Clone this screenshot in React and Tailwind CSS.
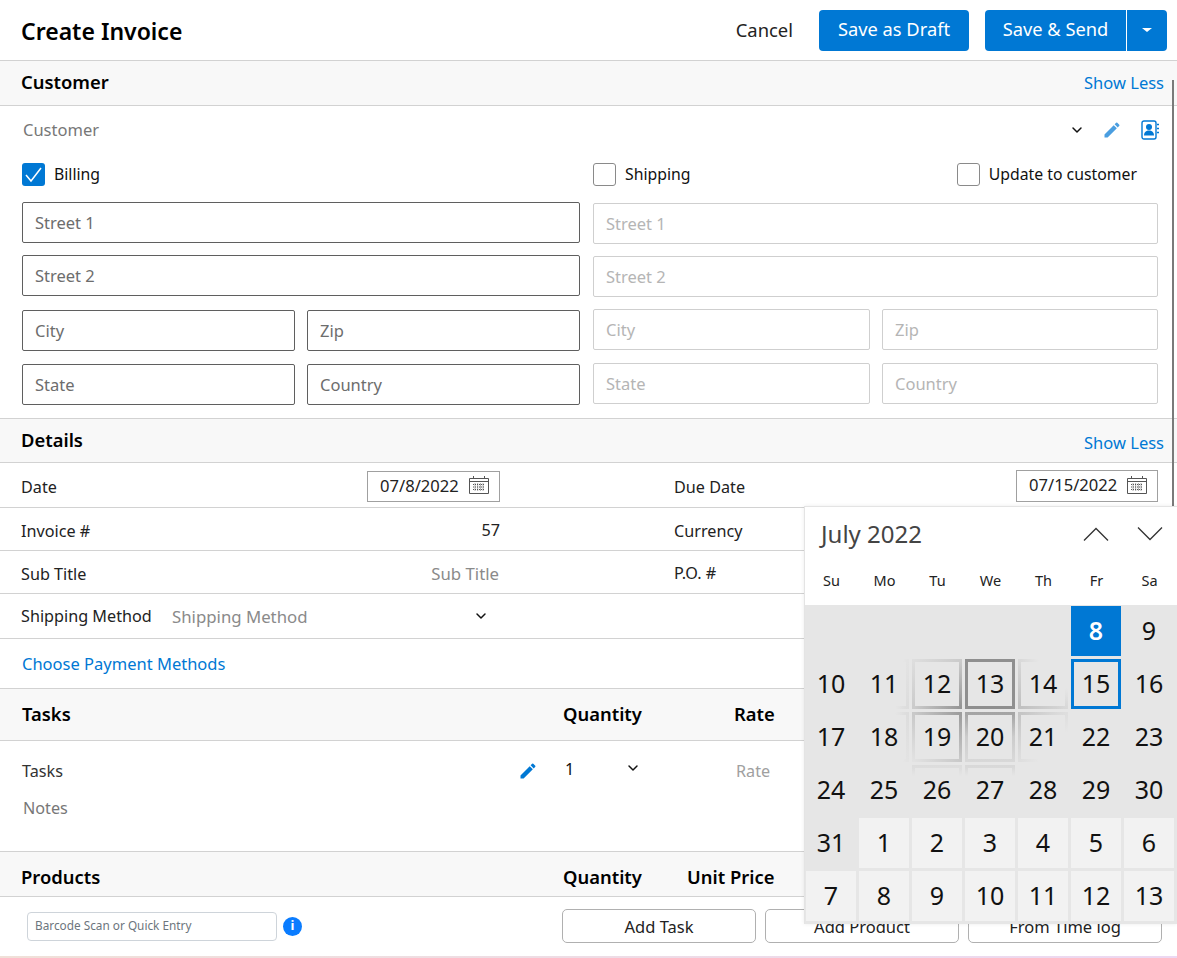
import React from "react";
import { ChevronDown } from "lucide-react";

const font = "font-['Noto_Sans','Liberation_Sans',sans-serif]";

function EditIcon({ className }) {
  return (
    <svg viewBox="0 0 24 24" className={className} fill="currentColor">
      <path d="M3 17.25V21h3.75L17.81 9.94l-3.75-3.75L3 17.25zM20.71 7.04a1 1 0 0 0 0-1.41l-2.34-2.34a1 1 0 0 0-1.41 0l-1.83 1.83 3.75 3.75 1.83-1.83z" />
    </svg>
  );
}

function ContactIcon() {
  return (
    <svg viewBox="0 0 18 20" className="w-[18px] h-[20px] text-[#0078d4]" fill="none">
      <rect x="1" y="1" width="14" height="18" rx="2" stroke="currentColor" strokeWidth="1.4" />
      <circle cx="8" cy="7" r="3" fill="currentColor" />
      <path d="M3 15.500c0-3.500 2.200-5 5-5s5 1.500 5 5z" fill="currentColor" />
      <path d="M16 4.500h2M16 8.500h2M16 12.500h2" stroke="currentColor" strokeWidth="1.600" />
    </svg>
  );
}

function CalendarIcon() {
  return (
    <svg viewBox="0 0 20 20" className="w-5 h-5 text-[#555] -translate-y-[1px]" fill="none" stroke="currentColor">
      <path d="M.5 3.500h19v15H.5z" />
      <path d="M.5 6.500h19M4.500 1v3M15.500 1v3" />
      <path d="M4 9.500h12M4 12h12M4 14.500h12M6 8.500v7.500M8.700 8.500v7.500M11.400 8.500v7.500M14 8.500v7.500" strokeDasharray="1 1" />
    </svg>
  );
}

function SectionHead({ title, action, className, titleClass = "", actionClass = "" }) {
  return (
    <div className={`flex items-center justify-between bg-[#f8f8f8] border-b border-[#d2d2d2] pl-[21px] pr-[13px] ${className}`}>
      <span className={`text-[18.4px] font-semibold text-black ${titleClass}`}>{title}</span>
      {action && <span className={`text-[16.5px] text-[#0078d4] ${actionClass}`}>{action}</span>}
    </div>
  );
}

function Check({ checked, label, className = "" }) {
  return (
    <label className={`flex items-center gap-[9px] text-[15.8px] text-[#111] ${className}`}>
      {checked ? (
        <span className="w-[23px] h-[23px] rounded-[3px] bg-[#0078d4] flex items-center justify-center">
          <svg viewBox="0 0 23 23" className="w-[23px] h-[23px]" fill="none" stroke="white" strokeWidth="1.500">
            <path d="M4 12l5 6L19 5" />
          </svg>
        </span>
      ) : (
        <span className="w-[23px] h-[23px] rounded-[3px] border border-[#8a8a8a] bg-white" />
      )}
      {label}
    </label>
  );
}

function Field({ label, active, className = "" }) {
  return (
    <div
      className={`h-[41px] flex items-center rounded-[2px] border pl-[12px] pt-[1px] text-[16.5px] ${
        active ? "border-[#5f5f5f] text-[#6d6d6d]" : "border-[#cfcfcf] text-[#b5b5b5]"
      } ${className}`}
    >
      {label}
    </div>
  );
}

function AddressColumn({ active, className }) {
  return (
    <div className={`flex flex-col ${className}`}>
      <Field label="Street 1" active={active} />
      <Field label="Street 2" active={active} className="mt-3" />
      <div className={`grid gap-3 ${active ? "grid-cols-[273px_273px] mt-[14px]" : "grid-cols-[277px_276px] mt-3"}`}>
        <Field label="City" active={active} />
        <Field label="Zip" active={active} />
      </div>
      <div className={`grid gap-3 mt-[13px] ${active ? "grid-cols-[273px_273px]" : "grid-cols-[277px_276px]"}`}>
        <Field label="State" active={active} />
        <Field label="Country" active={active} />
      </div>
    </div>
  );
}

function DateBox({ value, className }) {
  return (
    <div className={`flex items-center justify-between border border-[#a0a0a0] text-[16.6px] text-[#222] pl-3 pr-[10px] ${className}`}>
      {value}
      <CalendarIcon />
    </div>
  );
}

function DetailRow({ left, right, className }) {
  return (
    <div className={`flex items-center border-b border-[#d2d2d2] ${className}`}>
      <div className="w-[479px] ml-[21px] flex items-center justify-between text-[16.2px] text-[#222]">{left}</div>
      <div className="ml-[174px] flex-1 pr-[19px] flex items-center justify-between text-[16.2px] text-[#222]">{right}</div>
    </div>
  );
}

const weeks = [
  [null, null, null, null, null, 8, 9],
  [10, 11, 12, 13, 14, 15, 16],
  [17, 18, 19, 20, 21, 22, 23],
  [24, 25, 26, 27, 28, 29, 30],
  [31, 1, 2, 3, 4, 5, 6],
  [7, 8, 9, 10, 11, 12, 13],
];

// hover reveal around the pointer, lives on 12/13/14 and 19/20/21
const reveal = {
  "1-1": "border-[3px] [border-image:linear-gradient(100deg,#e6e6e6_78%,#dcdcdc)_1]",
  "1-2": "border-[3px] [border-image:linear-gradient(135deg,#dedede,#cbcbcb_50%,#959595)_1]",
  "1-3": "border-[3px] border-[#8f8f8f]",
  "1-4": "border-[3px] [border-image:linear-gradient(225deg,#e6e6e6_30%,#d2d2d2_60%,#c0c0c0)_1]",
  "2-1": "border-[3px] [border-image:linear-gradient(80deg,#e6e6e6_78%,#dcdcdc)_1]",
  "2-2": "border-[3px] [border-image:linear-gradient(45deg,#e2e2e2,#c9c9c9_50%,#9c9c9c)_1]",
  "2-3": "border-[3px] [border-image:linear-gradient(to_bottom,#a4a4a4,#cccccc_50%,#d8d8d8)_1]",
  "2-4": "border-[3px] [border-image:linear-gradient(135deg,#c4c4c4,#dadada_40%,#e6e6e6_70%)_1]",
  "3-2": "border-[3px] [border-image:linear-gradient(to_bottom,#dcdcdc,#e6e6e6_20%)_1]",
  "3-3": "border-[3px] [border-image:linear-gradient(to_bottom,#d8d8d8,#e6e6e6_20%)_1]",
};

function dayClass(row, col) {
  if (row === 0 && col === 5) return "bg-[#0078d4] text-white font-semibold";
  if (row === 1 && col === 5) return "border-[3px] border-[#0078d4]";
  if (reveal[`${row}-${col}`]) return reveal[`${row}-${col}`];
  if (row === 4 && col > 0) return "bg-[#f2f2f2]";
  if (row === 5) return "bg-[#f2f2f2]";
  return "";
}

function CalendarPopup() {
  return (
    <div className="absolute left-[804px] top-[506px] w-[373px] h-[418px] flex flex-col border-l border-t border-[#e4e4e4] bg-[#e6e6e6] shadow-[0_0_4px_rgba(0,0,0,0.08)]">
      <div className="h-[98px] bg-white flex flex-col">
        <div className="flex items-center justify-between h-[56px] pl-4 pr-[14px] pb-[2px]">
          <span className="text-[24px] text-[#444]">July 2022</span>
          <div className="flex items-center gap-[28px] text-[#333]">
            <svg viewBox="0 0 26 14" className="w-[26px] h-[14px]" fill="none" stroke="currentColor" strokeWidth="1.300">
              <path d="M1 13.500 13 1.500l12 12" />
            </svg>
            <svg viewBox="0 0 26 14" className="w-[26px] h-[14px]" fill="none" stroke="currentColor" strokeWidth="1.300">
              <path d="M1 .500l12 12 12-12" />
            </svg>
          </div>
        </div>
        <div className="grid grid-cols-[repeat(7,53px)] text-[14.5px] text-[#222] text-center mt-[7px]">
          {["Su", "Mo", "Tu", "We", "Th", "Fr", "Sa"].map((d) => (
            <span key={d}>{d}</span>
          ))}
        </div>
      </div>
      <div className="grid grid-cols-[repeat(7,50px)] auto-rows-[50px] gap-[3px] pl-[1px] pt-[1px]">
        {weeks.flatMap((week, r) =>
          week.map((d, c) => (
            <div
              key={`${r}-${c}`}
              className={`flex items-center justify-center text-[25px] text-[#111] ${dayClass(r, c)}`}
            >
              {d}
            </div>
          ))
        )}
      </div>
    </div>
  );
}

export default function App() {
  return (
    <div className={`relative w-[1177px] h-[958px] overflow-hidden bg-white ${font}`}>
      {/* Top bar */}
      <div className="h-[61px] flex items-center border-b border-[#d2d2d2] pl-[21px] pr-[10px]">
        <h1 className="text-[23px] font-semibold text-black flex-1 pt-[3px]">Create Invoice</h1>
        <button className="text-[18.4px] text-[#222] mr-[26px]">Cancel</button>
        <button className="h-[41px] w-[150px] rounded-[4px] bg-[#0078d4] text-white text-[18.3px] pb-[2px] mr-4">Save as Draft</button>
        <div className="h-[41px] w-[182px] rounded-[4px] bg-[#0078d4] text-white text-[18.3px] flex">
          <span className="flex-1 flex items-center justify-center border-r border-white pb-[2px]">Save &amp; Send</span>
          <span className="w-[40px] flex items-center justify-center">
            <span className="border-x-[5px] border-x-transparent border-t-[4px] border-t-white" />
          </span>
        </div>
      </div>

      <SectionHead title="Customer" action="Show Less" className="h-[45px]" titleClass="pb-[2px]" />

      {/* Customer */}
      <div className="h-[313px] border-b border-[#d2d2d2]">
        <div className="flex items-center h-[47px] pl-[23px] pr-[18px] text-[16.5px] text-[#777]">
          <span className="flex-1 pt-[2px]">Customer</span>
          <ChevronDown size={16} strokeWidth={2.2} className="text-[#111] mr-[17px]" />
          <EditIcon className="w-[20px] h-[20px] text-[#4a9ee0] mr-[19px]" />
          <ContactIcon />
        </div>
        <div className="flex items-center h-[43px] pl-[22px] pr-[40px]">
          <Check checked label="Billing" className="w-[571px]" />
          <Check label="Shipping" className="flex-1" />
          <Check label="Update to customer" />
        </div>
        <div className="flex items-start pl-[22px] pr-[19px] pt-[6px]">
          <AddressColumn active className="w-[558px]" />
          <AddressColumn className="ml-[13px] mt-[1px] w-[565px]" />
        </div>
      </div>

      <SectionHead title="Details" action="Show Less" className="h-[44px]" titleClass="pb-[2px]" actionClass="pt-[6px]" />

      <DetailRow
        className="h-[45px]"
        left={
          <>
            <span className="pt-[4px]">Date</span>
            <DateBox value="07/8/2022" className="w-[133px] h-[31px] mt-[2px]" />
          </>
        }
        right={
          <>
            <span className="pt-[5px]">Due Date</span>
            <DateBox value="07/15/2022" className="w-[142px] h-[32px] mt-[1px]" />
          </>
        }
      />
      <DetailRow
        className="h-[43px]"
        left={
          <>
            <span className="pt-[4px]">Invoice #</span>
            <span className="text-[#222] pt-[2px]">57</span>
          </>
        }
        right={<span className="pt-[4px]">Currency</span>}
      />
      <DetailRow
        className="h-[43px]"
        left={
          <>
            <span className="pt-[4px]">Sub Title</span>
            <span className="text-[#8a8a8a] text-[16.8px] pt-[3px] pr-[1px]">Sub Title</span>
          </>
        }
        right={<span className="pt-[3px]">P.O. #</span>}
      />
      <div className="h-[45px] flex items-center border-b border-[#d2d2d2] pl-[21px] text-[16.2px] text-[#222]">
        <span className="w-[151px]">Shipping Method</span>
        <span className="w-[301px] text-[#8a8a8a] text-[16.8px] pt-[1px]">Shipping Method</span>
        <ChevronDown size={16} strokeWidth={2.2} className="text-[#111]" />
      </div>
      <div className="h-[50px] flex items-center border-b border-[#d2d2d2] pl-[22px] pt-[2px] text-[16.5px] text-[#0078d4]">
        Choose Payment Methods
      </div>

      {/* Tasks */}
      <div className="h-[52px] flex items-center bg-[#f8f8f8] border-b border-[#d2d2d2] pl-[22px] pb-[2px] text-[18.4px] font-semibold text-black">
        <span className="w-[541px]">Tasks</span>
        <span className="w-[171px]">Quantity</span>
        <span>Rate</span>
      </div>
      <div className="h-[111px] border-b border-[#d2d2d2] pl-[22px] pt-[18px] text-[16.2px] text-[#333]">
        <div className="flex items-center h-[24px]">
          <span className="w-[496px]">Tasks</span>
          <EditIcon className="w-[20px] h-[20px] text-[#0078d4] mr-[27px]" />
          <span className="w-[60px] text-[#111] -translate-y-[2px]">1</span>
          <ChevronDown size={16} strokeWidth={2.2} className="text-[#111] -translate-y-[3px] mr-[95px]" />
          <span className="text-[#a0a0a0]">Rate</span>
        </div>
        <div className="mt-[13px] text-[#777] pl-[1px]">Notes</div>
      </div>

      {/* Products */}
      <div className="h-[45px] flex items-center bg-[#f8f8f8] border-b border-[#d2d2d2] pl-[21px] pt-[6px] text-[18.4px] font-semibold text-black">
        <span className="w-[542px]">Products</span>
        <span className="w-[124px]">Quantity</span>
        <span>Unit Price</span>
      </div>
      <div className="h-[60px] flex items-center pl-[27px] pb-[2px]">
        <div className="w-[250px] h-[29px] flex items-center rounded-[4px] border border-[#ced4da] pl-[7px] text-[11.8px] text-[#6c757d]">
          Barcode Scan or Quick Entry
        </div>
        <span className="ml-[6px] w-[19px] h-[19px] rounded-full bg-[#0a7cff] text-white flex items-center justify-center text-[13px] font-bold">i</span>
        <div className="ml-[260px] flex gap-[9px]">
          {["Add Task", "Add Product", "From Time log"].map((b) => (
            <button key={b} className="w-[194px] h-[34px] rounded-[5px] border border-[#b0b0b0] text-[16.5px] text-[#222] pt-[2px]">
              {b}
            </button>
          ))}
        </div>
      </div>
      <div className="absolute left-0 right-0 bottom-0 h-[2px] bg-gradient-to-r from-[#f0e0d8] to-[#ecd8f2]" />

      {/* scroll thumb */}
      <div className="absolute left-[1172px] top-[80px] w-[2px] h-[427px] bg-[#7a7a7a]" />

      <CalendarPopup />
    </div>
  );
}
